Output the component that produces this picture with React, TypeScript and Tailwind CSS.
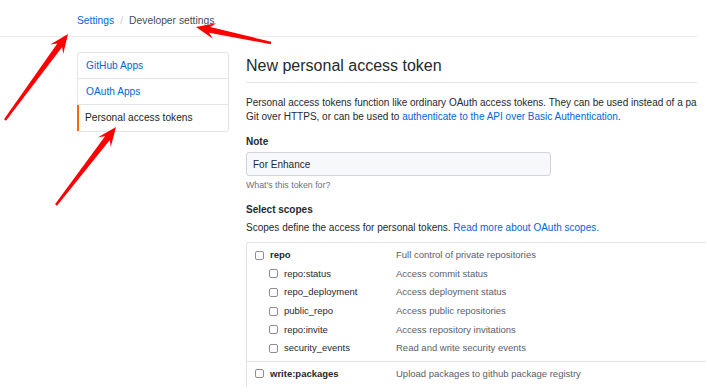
import React from "react"

type Pt = [number, number]

// tapered annotation arrow, tail -> tip
function arrowPoints(tail: Pt, tip: Pt) {
  const [x1, y1] = tail
  const [x2, y2] = tip
  const dx = x2 - x1
  const dy = y2 - y1
  const len = Math.hypot(dx, dy)
  const ux = dx / len
  const uy = dy / len
  const nx = -uy
  const ny = ux
  const headLen = 19
  const headW = 8
  const neckW = 3
  const tailW = 1.2
  const bx = x2 - ux * headLen
  const by = y2 - uy * headLen
  const nbx = x2 - ux * (headLen - 5)
  const nby = y2 - uy * (headLen - 5)
  const pts: Pt[] = [
    [x1 + nx * tailW, y1 + ny * tailW],
    [nbx + nx * neckW, nby + ny * neckW],
    [bx + nx * headW, by + ny * headW],
    [x2, y2],
    [bx - nx * headW, by - ny * headW],
    [nbx - nx * neckW, nby - ny * neckW],
    [x1 - nx * tailW, y1 - ny * tailW],
  ]
  return pts.map((p) => p.join(",")).join(" ")
}

const scopes = [
  { name: "repo", desc: "Full control of private repositories", top: true },
  { name: "repo:status", desc: "Access commit status" },
  { name: "repo_deployment", desc: "Access deployment status" },
  { name: "public_repo", desc: "Access public repositories" },
  { name: "repo:invite", desc: "Access repository invitations" },
  { name: "security_events", desc: "Read and write security events" },
]

const Box = () => <span className="inline-block w-[9px] h-[9px] rounded-[2px] border border-[#8e8e8e] bg-white shrink-0" />

const ScopeRow = ({ name, desc, top }: { name: string; desc: string; top?: boolean }) => (
  <div className="flex items-center h-[18.6px]">
    <div className={`flex items-center gap-[6px] w-[149px] ${top ? "pl-[8px]" : "pl-[22px]"}`}>
      <Box />
      <span className={top ? "font-bold text-[#24292e]" : "text-[#24292e]"}>{name}</span>
    </div>
    <span className="text-[#586069]">{desc}</span>
  </div>
)

export default function App() {
  return (
    <div className="relative w-[707px] h-[392px] overflow-hidden bg-white text-[10px] text-[#24292e]" style={{ fontFamily: "'Liberation Sans', Arial, sans-serif" }}>
      <div className="h-[37px] border-b border-[#eaecef] w-[697px] flex items-center pl-[77px] pt-[5px] text-[10.3px]">
        <a className="text-[#0366d6]">Settings</a>
        <span className="mx-[6px] text-[#c6cbd1]">/</span>
        <span className="text-[#444d56]">Developer settings</span>
      </div>

      <div className="flex pt-[15px] pl-[77px] gap-[17px]">
        <nav className="w-[152px] h-fit border border-[#e1e4e8] rounded-[3px] text-[10.2px]">
          <div className="h-[26px] flex items-center pl-[8px] border-b border-[#e1e4e8] text-[#0366d6]">GitHub Apps</div>
          <div className="h-[26px] flex items-center pl-[8px] border-b border-[#e1e4e8] text-[#0366d6]">OAuth Apps</div>
          <div className="h-[26px] flex items-center pl-[6px] border-l-2 border-[#f66a0a] -ml-px text-[#1b1f23]">Personal access tokens</div>
        </nav>

        <main className="w-[451px]">
          <div className="h-[31px] border-b border-[#e1e4e8] flex items-center pb-[2px]">
            <h1 className="text-[16px] text-[#24292e]">New personal access token</h1>
          </div>
          <p className="mt-[13px] leading-[14px] whitespace-nowrap">
            Personal access tokens function like ordinary OAuth access tokens. They can be used instead of a pa
            <br />
            Git over HTTPS, or can be used to <a className="text-[#0366d6]">authenticate to the API over Basic Authentication</a>.
          </p>

          <div className="mt-[11px] font-bold leading-[14px]">Note</div>
          <div className="mt-[3px] w-[305px] h-[24px] border border-[#d1d5da] rounded-[3px] bg-[#f6f8fa] flex items-center pl-[6px] text-[10px]">For Enhance</div>
          <div className="mt-[3px] text-[8.8px] text-[#6a737d] leading-[12px]">What's this token for?</div>

          <div className="mt-[12px] font-bold leading-[14px]">Select scopes</div>
          <div className="mt-[4px] leading-[14px]">
            Scopes define the access for personal tokens. <a className="text-[#0366d6]">Read more about OAuth scopes.</a>
          </div>

          <div className="mt-[7px] border-t border-l border-[#e1e4e8] rounded-tl-[3px] w-[460px] text-[9.5px]">
            <div className="pt-[3px] pb-[3px] border-b border-[#e1e4e8]">
              {scopes.map((s) => (
                <ScopeRow key={s.name} {...s} />
              ))}
            </div>
            <div className="pt-[3px] pb-[4px]">
              <ScopeRow name="write:packages" desc="Upload packages to github package registry" top />
            </div>
          </div>
        </main>
      </div>

      <svg className="absolute left-0 top-0 pointer-events-none" width="707" height="392">
        <polygon points={arrowPoints([5, 120], [68, 34])} fill="#ff0000" />
        <polygon points={arrowPoints([271, 43], [196, 27])} fill="#ff0000" />
        <polygon points={arrowPoints([56, 205], [116, 127])} fill="#ff0000" />
      </svg>
    </div>
  )
}
